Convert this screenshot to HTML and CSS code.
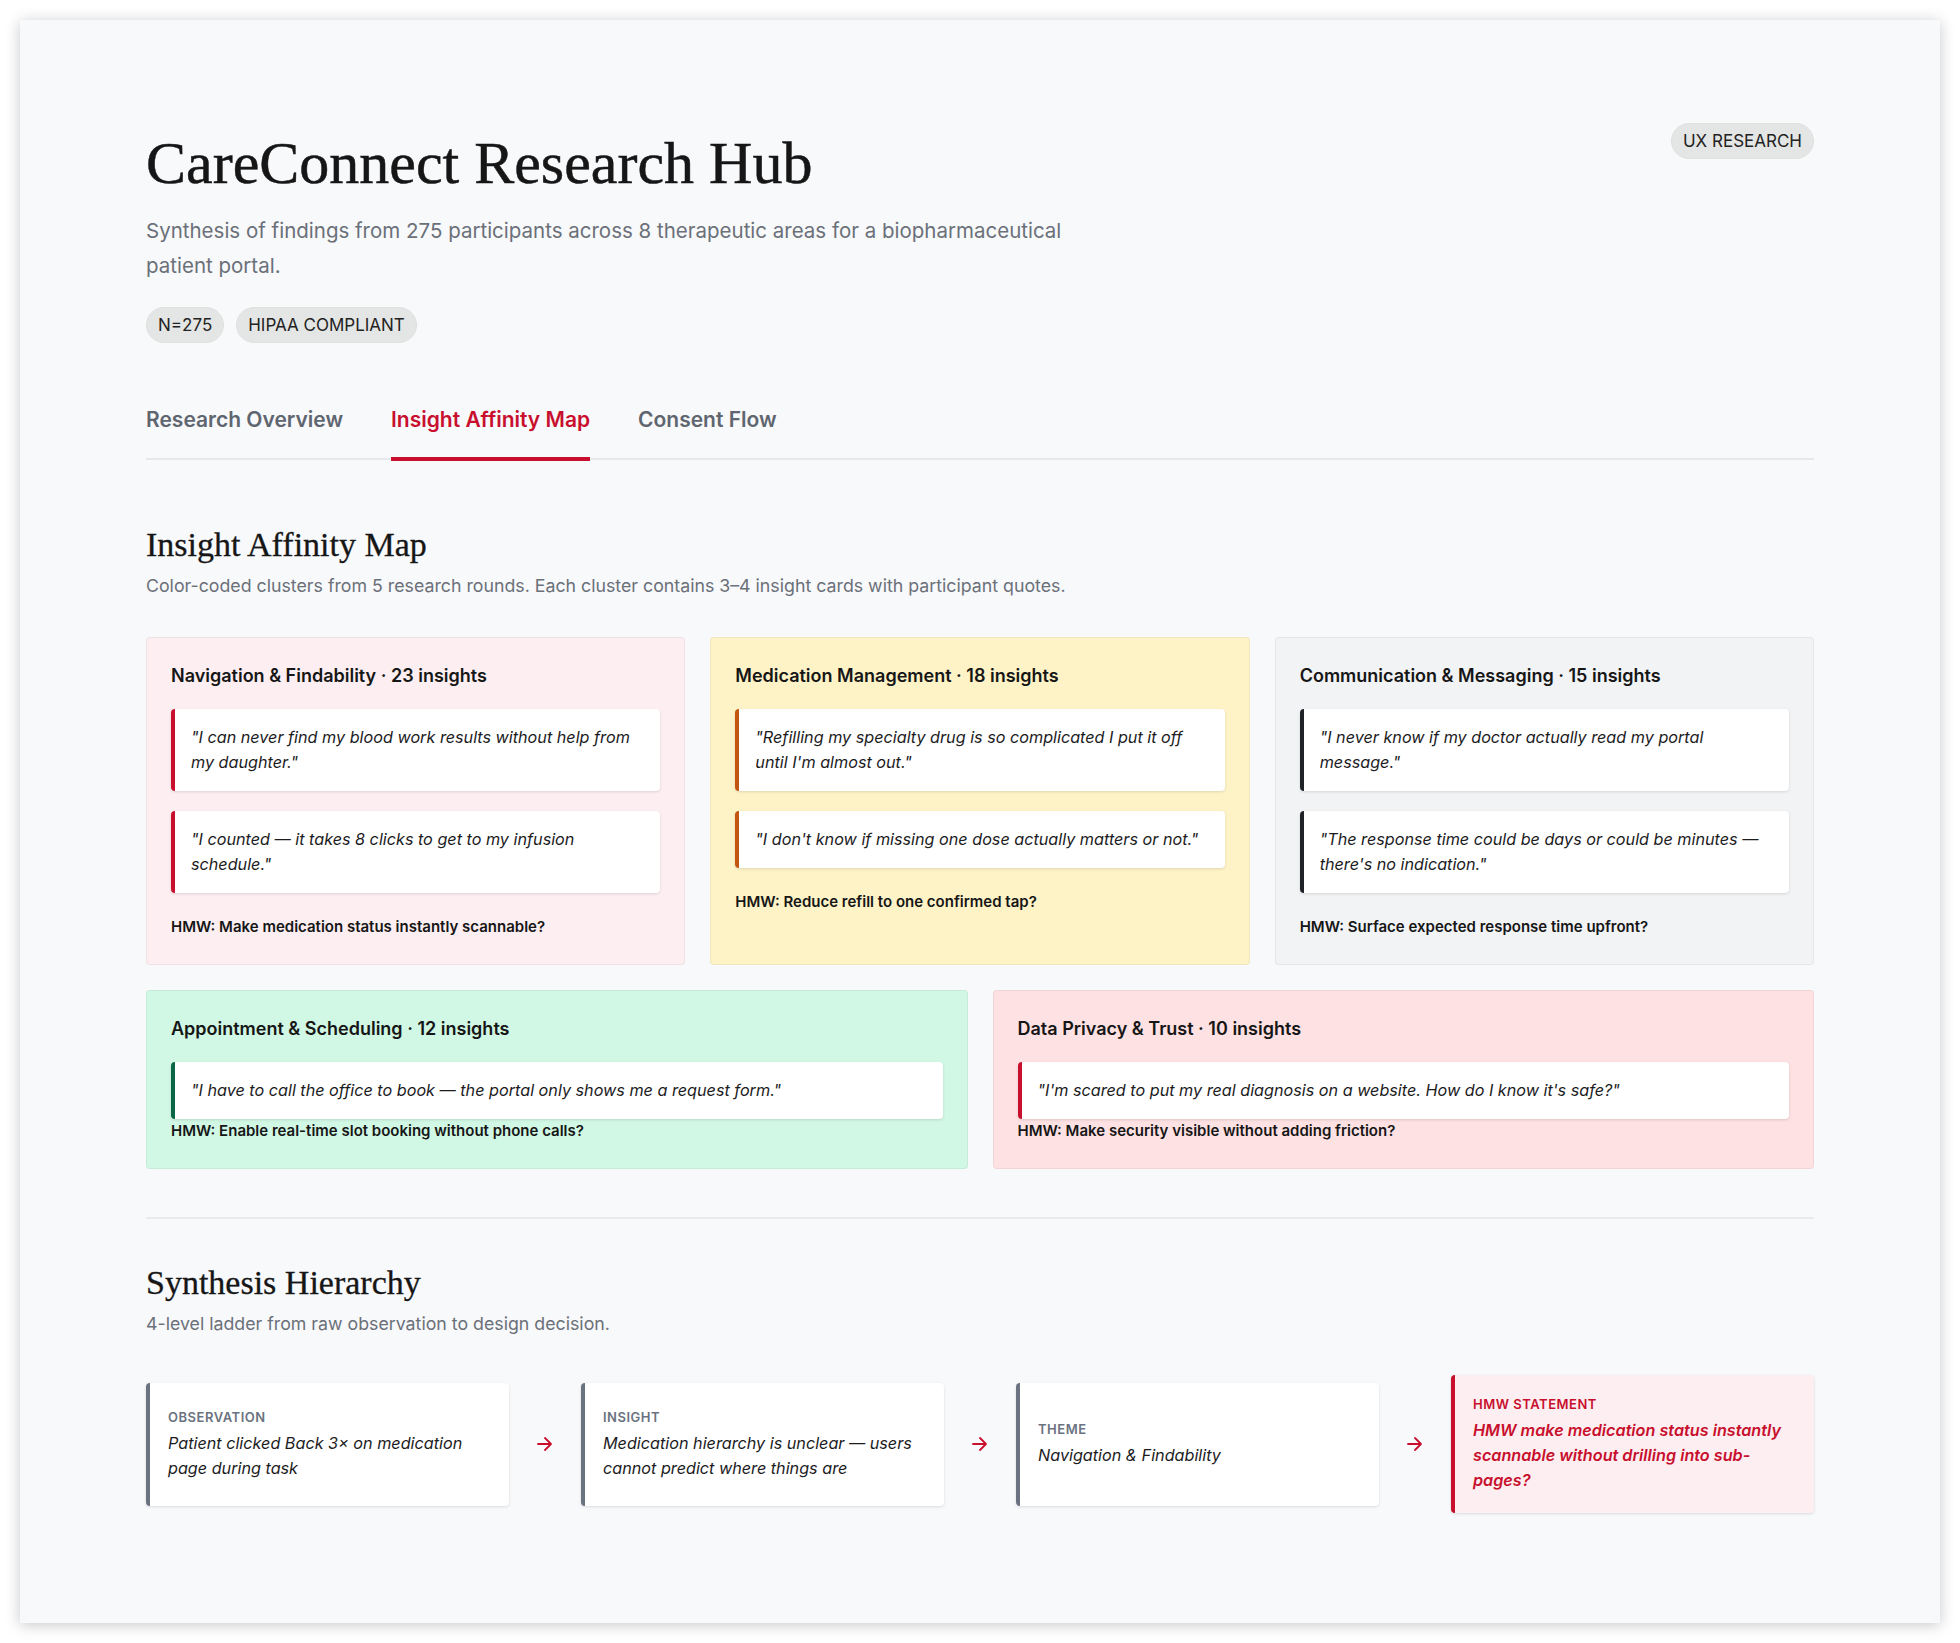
FILE: index.html
```html
<!DOCTYPE html>
<html lang="en">
<head>
  <meta charset="UTF-8">
  <meta name="viewport" content="width=device-width, initial-scale=1.0">
  <title>CareConnect Research Hub</title>
  <link rel="stylesheet" href="styles.css">
</head>
<body>
  <div class="page">
    <header class="hero">
      <div class="hero-text">
        <h1>CareConnect Research Hub</h1>
        <p class="lede">Synthesis of findings from 275 participants across 8 therapeutic areas for a biopharmaceutical patient portal.</p>
        <div class="chips">
          <span class="chip">N=275</span>
          <span class="chip">HIPAA COMPLIANT</span>
        </div>
      </div>
      <span class="chip">UX RESEARCH</span>
    </header>

    <nav class="tabs">
      <a class="tab">Research Overview</a>
      <a class="tab active">Insight Affinity Map</a>
      <a class="tab">Consent Flow</a>
    </nav>

    <section class="block">
      <h2>Insight Affinity Map</h2>
      <p class="desc">Color-coded clusters from 5 research rounds. Each cluster contains 3–4 insight cards with participant quotes.</p>

      <div class="clusters three">
        <div class="cluster pink">
          <h3>Navigation &amp; Findability · 23 insights</h3>
          <div class="quote red">"I can never find my blood work results without help from my daughter."</div>
          <div class="quote red">"I counted — it takes 8 clicks to get to my infusion schedule."</div>
          <p class="hmw">HMW: Make medication status instantly scannable?</p>
        </div>
        <div class="cluster yellow">
          <h3>Medication Management · 18 insights</h3>
          <div class="quote orange">"Refilling my specialty drug is so complicated I put it off until I'm almost out."</div>
          <div class="quote orange">"I don't know if missing one dose actually matters or not."</div>
          <p class="hmw">HMW: Reduce refill to one confirmed tap?</p>
        </div>
        <div class="cluster gray">
          <h3>Communication &amp; Messaging · 15 insights</h3>
          <div class="quote dark">"I never know if my doctor actually read my portal message."</div>
          <div class="quote dark">"The response time could be days or could be minutes — there's no indication."</div>
          <p class="hmw">HMW: Surface expected response time upfront?</p>
        </div>
      </div>

      <div class="clusters two">
        <div class="cluster green">
          <h3>Appointment &amp; Scheduling · 12 insights</h3>
          <div class="quote teal">"I have to call the office to book — the portal only shows me a request form."</div>
          <p class="hmw">HMW: Enable real-time slot booking without phone calls?</p>
        </div>
        <div class="cluster rose">
          <h3>Data Privacy &amp; Trust · 10 insights</h3>
          <div class="quote red">"I'm scared to put my real diagnosis on a website. How do I know it's safe?"</div>
          <p class="hmw">HMW: Make security visible without adding friction?</p>
        </div>
      </div>
    </section>

    <hr class="divider">

    <section class="block second">
      <h2>Synthesis Hierarchy</h2>
      <p class="desc">4-level ladder from raw observation to design decision.</p>

      <div class="ladder">
        <div class="step">
          <span class="step-label">Observation</span>
          <p>Patient clicked Back 3× on medication page during task</p>
        </div>
        <svg class="arrow" viewBox="0 0 24 24"><path d="M5 12h13M12 6l6 6-6 6"/></svg>
        <div class="step">
          <span class="step-label">Insight</span>
          <p>Medication hierarchy is unclear — users cannot predict where things are</p>
        </div>
        <svg class="arrow" viewBox="0 0 24 24"><path d="M5 12h13M12 6l6 6-6 6"/></svg>
        <div class="step">
          <span class="step-label">Theme</span>
          <p>Navigation &amp; Findability</p>
        </div>
        <svg class="arrow" viewBox="0 0 24 24"><path d="M5 12h13M12 6l6 6-6 6"/></svg>
        <div class="step final">
          <span class="step-label">HMW Statement</span>
          <p>HMW make medication status instantly scannable without drilling into sub-pages?</p>
        </div>
      </div>
    </section>
  </div>
</body>
</html>
```

FILE: styles.css
```css
* {
  margin: 0;
  padding: 0;
  box-sizing: border-box;
}

body {
  font-family: Inter, "Liberation Sans", sans-serif;
  background: #fff;
  color: #1c1c1e;
  padding: 20px;
}

.page {
  background: #f8f9fb;
  box-shadow: 0 2px 14px rgba(0, 0, 0, 0.22);
  padding: 107px 126px 110px;
}

/* header */
.hero {
  display: flex;
  justify-content: space-between;
  align-items: flex-start;
}

.hero h1 {
  font-family: "Liberation Serif", serif;
  font-size: 60px;
  font-weight: 400;
  line-height: 72px;
  color: #161616;
  -webkit-text-stroke: 0.5px #161616;
}

.hero > .chip {
  margin-top: -4px;
}

.lede {
  max-width: 960px;
  margin-top: 14px;
  font-size: 20.5px;
  line-height: 35px;
  color: #6b7079;
}

.chips {
  display: flex;
  gap: 12px;
  margin-top: 24px;
}

.chip {
  display: inline-block;
  padding: 0 11px;
  height: 36px;
  line-height: 34px;
  border-radius: 18px;
  background: #e4e6e5;
  border: 1px solid #dfe1e0;
  font-size: 17px;
  color: #222;
}

/* tabs */
.tabs {
  display: flex;
  gap: 48px;
  margin-top: 64px;
  border-bottom: 2px solid #e6e8eb;
}

.tab {
  padding-bottom: 25px;
  font-size: 21px;
  font-weight: 600;
  color: #5f6670;
  border-bottom: 4px solid transparent;
  margin-bottom: -3px;
}

.tab.active {
  color: #c8102e;
  border-bottom-color: #c8102e;
}

/* sections */
.block {
  margin-top: 63px;
}

.block.second {
  margin-top: 42px;
}

.block h2 {
  font-family: "Liberation Serif", serif;
  font-size: 34px;
  font-weight: 400;
  line-height: 44px;
  color: #161616;
  -webkit-text-stroke: 0.3px #161616;
}

.desc {
  margin-top: 6px;
  font-size: 17.75px;
  line-height: 26px;
  color: #6b7079;
}

.clusters {
  display: grid;
  gap: 25px;
  margin-top: 38px;
}

.clusters.three {
  grid-template-columns: repeat(3, 1fr);
}

.clusters.two {
  grid-template-columns: repeat(2, 1fr);
  margin-top: 25px;
}

.cluster {
  padding: 25px 24px;
  border-radius: 4px;
  border: 1px solid rgba(0, 0, 0, 0.05);
}

.cluster.pink { background: #fdeff1; }
.cluster.yellow { background: #fef3c7; }
.cluster.gray { background: #f2f3f5; }
.cluster.green { background: #d1f8e4; }
.cluster.rose { background: #fee1e2; }

.cluster h3 {
  font-size: 18px;
  font-weight: 600;
  line-height: 26px;
  color: #161616;
  margin-bottom: 20px;
}

.quote {
  background: #fff;
  border-left: 4px solid #c8102e;
  border-radius: 4px;
  box-shadow: 0 1px 3px rgba(0, 0, 0, 0.12);
  padding: 16px 16px 16px 16px;
  margin-bottom: 20px;
  font-size: 16.2px;
  font-style: italic;
  line-height: 25px;
  color: #1c1c1e;
}

.quote.red { border-left-color: #c8102e; }
.quote.orange { border-left-color: #c2550f; }
.quote.dark { border-left-color: #1f2328; }
.quote.teal { border-left-color: #0b6647; }

.hmw {
  margin-top: 22px;
  font-size: 15px;
  font-weight: 600;
  line-height: 24px;
  color: #161616;
}

.clusters.two .quote {
  margin-bottom: 0;
}

.clusters.two .hmw {
  margin-top: 0;
}

.divider {
  border: 0;
  border-top: 2px solid #e8eaed;
  margin-top: 48px;
}

/* synthesis ladder */
.ladder {
  display: flex;
  align-items: center;
  gap: 24px;
  margin-top: 38px;
}

.step {
  flex: 1;
  min-height: 123px;
  display: flex;
  flex-direction: column;
  justify-content: center;
  padding: 20px 18px 20px 18px;
  background: #fff;
  border-left: 4px solid #6b7280;
  border-radius: 4px;
  box-shadow: 0 1px 3px rgba(0, 0, 0, 0.12);
}

.step-label {
  font-size: 13px;
  font-weight: 600;
  letter-spacing: 0.04em;
  text-transform: uppercase;
  line-height: 18px;
  color: #6b7280;
  margin-bottom: 5px;
}

.step p {
  font-size: 16.2px;
  font-style: italic;
  line-height: 25px;
  color: #1c1c1e;
}

.step.final {
  background: #fdeff1;
  border-left-color: #c8102e;
}

.step.final .step-label,
.step.final p {
  color: #c8102e;
}

.step.final p {
  font-weight: 600;
}

.arrow {
  width: 24px;
  height: 24px;
  flex: none;
  fill: none;
  stroke: #c8102e;
  stroke-width: 1.8;
  stroke-linecap: round;
  stroke-linejoin: round;
}
```
